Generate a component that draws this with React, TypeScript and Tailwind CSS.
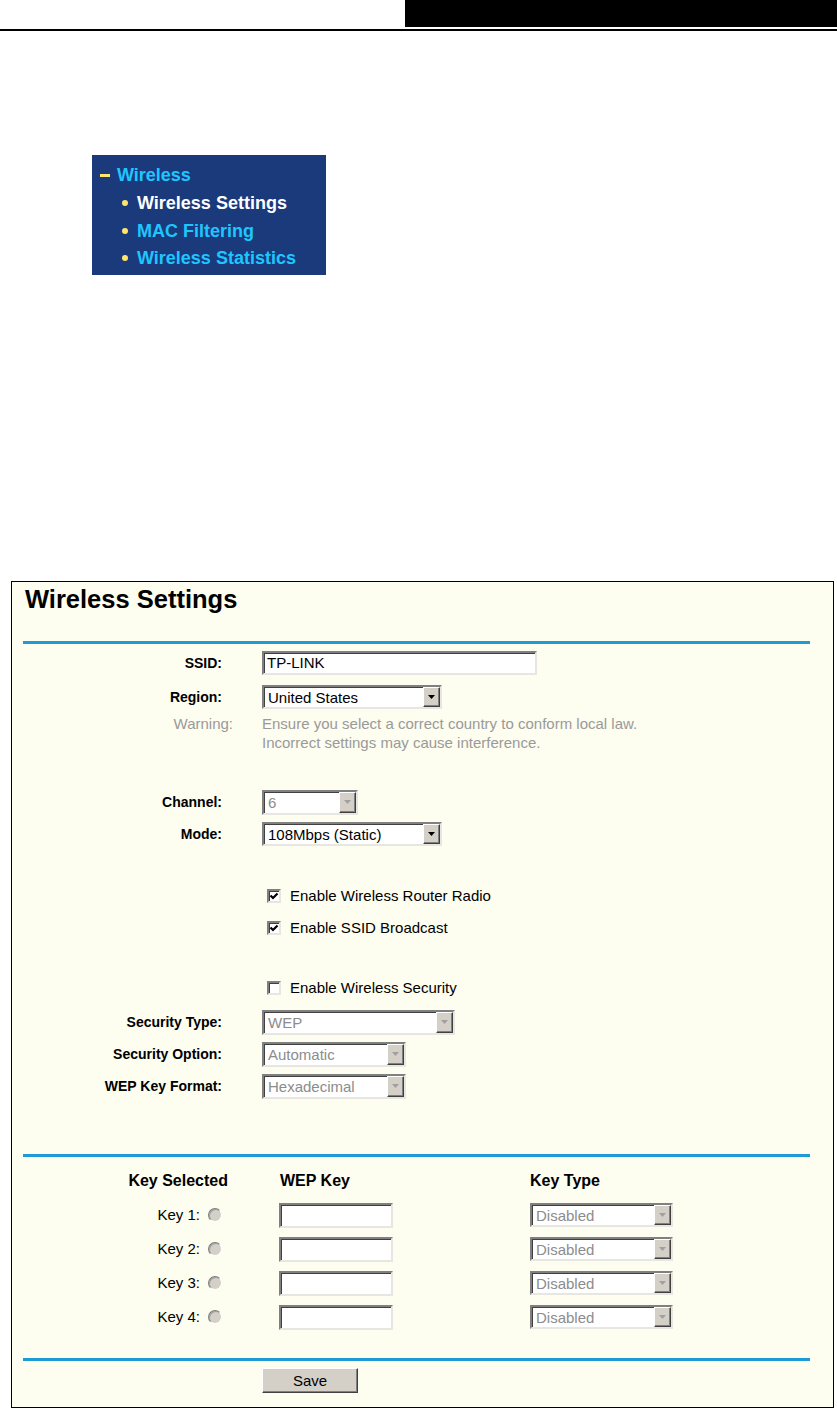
import React from 'react';

const sunken =
  'border-2 border-t-[#808080] border-l-[#808080] border-r-[#e8e6e0] border-b-[#e8e6e0] shadow-[inset_1px_1px_0_#404040] bg-white';

const Arrow: React.FC<{ disabled?: boolean }> = ({ disabled }) => (
  <div className="w-[17px] h-full bg-[#d4d0c8] border border-t-white border-l-white border-r-[#404040] border-b-[#404040] shadow-[inset_-1px_-1px_0_#808080] flex items-center justify-center shrink-0">
    <svg width="7" height="4" viewBox="0 0 7 4">
      <polygon points="0,0 7,0 3.5,4" fill={disabled ? '#a0a0a0' : '#000'} />
    </svg>
  </div>
);

interface SelectProps {
  value: string;
  className: string;
  disabled?: boolean;
}

const Select: React.FC<SelectProps> = ({ value, className, disabled }) => (
  <div className={`${sunken} ${className} flex items-stretch`}>
    <span
      className={`flex-1 pl-[4px] text-[15px] leading-none flex items-center ${
        disabled ? 'text-[#8c8c8c]' : 'text-black'
      }`}
    >
      {value}
    </span>
    <Arrow disabled={disabled} />
  </div>
);

const Checkbox: React.FC<{ checked?: boolean; label: string }> = ({ checked, label }) => (
  <div className="flex items-center">
    <div className={`ml-[5px] w-[14px] h-[14px] ${sunken} flex items-center justify-center`}>
      {checked && (
        <svg width="10" height="10" viewBox="0 0 10 10">
          <path d="M1.5 4.5 L4 7 L8.5 2.5" stroke="#000" strokeWidth="2.2" fill="none" />
        </svg>
      )}
    </div>
    <span className="ml-[9px] text-[15px] text-black">{label}</span>
  </div>
);

const Row: React.FC<{ label: string; h: string; children: React.ReactNode }> = ({ label, h, children }) => (
  <div className={`flex items-center ${h}`}>
    <div className="w-[210px] text-right text-[14px] font-bold text-black">{label}</div>
    <div className="ml-[40px] flex items-center">{children}</div>
  </div>
);

const BlueLine: React.FC = () => <div className="ml-[11px] w-[787px] h-[3px] bg-[#1e9ad6]" />;

const KeyRow: React.FC<{ n: number }> = ({ n }) => (
  <div className="flex items-center h-[34px]">
    <div className="w-[188px] text-right text-[15px] text-black">Key {n}:</div>
    <div className="ml-[8px] w-[14px] h-[14px] rounded-full bg-[#d4d0c8] border border-t-[#808080] border-l-[#808080] border-r-white border-b-white shadow-[inset_1px_1px_0_#a0a0a0]" />
    <div className={`ml-[57px] w-[114px] h-[25px] ${sunken}`} />
    <Select value="Disabled" disabled className="ml-[137px] w-[143px] h-[24px]" />
  </div>
);

export default function App() {
  return (
    <div className="w-[837px] h-[1409px] bg-white overflow-hidden font-['Liberation_Sans',Arial,sans-serif]">
      <div className="flex h-[27px]">
        <div className="ml-auto w-[432px] h-full bg-black" />
      </div>
      <div className="mt-[2px] h-[2px] bg-black" />

      {/* menu */}
      <div className="ml-[92px] mt-[124px] w-[234px] h-[120px] bg-[#1a3a7c] pt-[6px] font-bold text-[18px]">
        <div className="flex items-center h-[28px] pl-[8px]">
          <div className="w-[10px] h-[3px] bg-[#ffe46e]" />
          <span className="ml-[7px] text-[#1ec6ff]">Wireless</span>
        </div>
        {[
          { t: 'Wireless Settings', c: 'text-white' },
          { t: 'MAC Filtering', c: 'text-[#1ec6ff]' },
          { t: 'Wireless Statistics', c: 'text-[#1ec6ff]' },
        ].map((it, i) => (
          <div key={it.t} className={`flex items-center pl-[30px] ${i === 2 ? 'h-[26px]' : 'h-[28px]'}`}>
            <div className="w-[6px] h-[6px] rounded-full bg-[#ffe46e]" />
            <span className={`ml-[9px] ${it.c}`}>{it.t}</span>
          </div>
        ))}
      </div>

      {/* settings panel */}
      <div className="ml-[11px] mt-[306px] w-[823px] border border-black bg-[#fdfdf0]">
        <div className="h-[31px] pt-[3px] pl-[13px] text-[25.5px] leading-[28px] font-bold text-black">
          Wireless Settings
        </div>
        <div className="mt-[28px]">
          <BlueLine />
        </div>

        <div className="mt-[2px]">
          <Row label="SSID:" h="h-[34px]">
            <div className={`w-[275px] h-[24px] ${sunken} pl-[3px] flex items-center text-[15px] text-black`}>
              TP-LINK
            </div>
          </Row>
          <Row label="Region:" h="h-[34px]">
            <Select value="United States" className="w-[180px] h-[24px]" />
          </Row>
          <div className="flex text-[15px] leading-[19px] text-[#9a9a9a]">
            <div className="w-[221px] text-right">Warning:</div>
            <div className="ml-[29px]">
              Ensure you select a correct country to conform local law.
              <br />
              Incorrect settings may cause interference.
            </div>
          </div>
        </div>

        <div className="mt-[34px]">
          <Row label="Channel:" h="h-[32px]">
            <Select value="6" disabled className="w-[96px] h-[25px]" />
          </Row>
          <Row label="Mode:" h="h-[32px]">
            <Select value="108Mbps (Static)" className="w-[180px] h-[24px]" />
          </Row>
        </div>

        <div className="mt-[30px] pl-[250px]">
          <div className="h-[32px] flex items-center">
            <Checkbox checked label="Enable Wireless Router Radio" />
          </div>
          <div className="h-[32px] flex items-center">
            <Checkbox checked label="Enable SSID Broadcast" />
          </div>
          <div className="mt-[28px] h-[32px] flex items-center">
            <Checkbox label="Enable Wireless Security" />
          </div>
        </div>

        <div className="mt-[2px]">
          <Row label="Security Type:" h="h-[32px]">
            <Select value="WEP" disabled className="w-[193px] h-[25px]" />
          </Row>
          <Row label="Security Option:" h="h-[32px]">
            <Select value="Automatic" disabled className="w-[144px] h-[25px]" />
          </Row>
          <Row label="WEP Key Format:" h="h-[32px]">
            <Select value="Hexadecimal" disabled className="w-[144px] h-[25px]" />
          </Row>
        </div>

        <div className="mt-[52px]">
          <BlueLine />
        </div>

        <div className="mt-[7px]">
          <div className="flex items-center h-[34px] text-[16px] font-bold text-black">
            <div className="w-[216px] text-right">Key Selected</div>
            <div className="ml-[52px] w-[250px]">WEP Key</div>
            <div>Key Type</div>
          </div>
          {[1, 2, 3, 4].map((n) => (
            <KeyRow key={n} n={n} />
          ))}
        </div>

        <div className="mt-[24px]">
          <BlueLine />
        </div>

        <div className="mt-[7px] mb-[14px] pl-[250px]">
          <button className="w-[96px] h-[25px] bg-[#d4d0c8] border border-t-white border-l-white border-r-[#404040] border-b-[#404040] shadow-[inset_-1px_-1px_0_#808080] text-[15px] text-black leading-none">
            Save
          </button>
        </div>
      </div>
    </div>
  );
}
